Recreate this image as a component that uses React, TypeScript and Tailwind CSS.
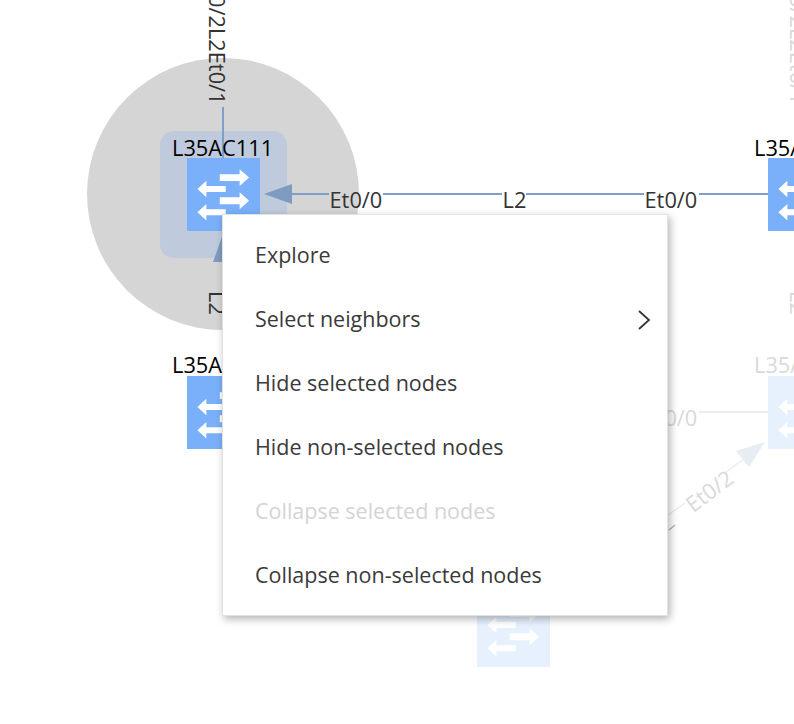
import React from 'react';

const labelFont = "font-['Open_Sans','Noto_Sans',sans-serif]";

const SwitchIcon = () => (
  <svg viewBox="0 0 73 73" className="w-full h-full">
    <g fill="#fff">
      <path d="M33 16h20v-5l9.500 8.500L53 28v-5H33z" />
      <path d="M39 28H19.500v-5.300L10.500 31l9 8.300V34H39z" />
      <path d="M33 39.300h20v-5l9.500 8.500L53 51.300v-5H33z" />
      <path d="M39 51.300H19.500V46l-9 8.300 9 8.300v-5.300H39z" />
    </g>
  </svg>
);

const Node = ({ left, top, faded }: { left: number; top: number; faded?: boolean }) => (
  <div
    className={`absolute w-[72.5px] h-[73px] ${faded ? 'bg-[#e6f1fd]' : 'bg-[#7ab0f9]'}`}
    style={{ left, top }}
  >
    <SwitchIcon />
  </div>
);

const Label = ({
  left,
  top,
  children,
  className = 'text-black',
}: {
  left: number;
  top: number;
  children: React.ReactNode;
  className?: string;
}) => (
  <span
    className={`absolute text-[21.8px] leading-[28px] whitespace-nowrap ${labelFont} ${className}`}
    style={{ left, top }}
  >
    {children}
  </span>
);

const VerticalLabel = ({
  left,
  top,
  children,
  className = 'text-[#333]',
}: {
  left: number;
  top: number;
  children: React.ReactNode;
  className?: string;
}) => (
  <span
    className={`absolute [writing-mode:vertical-rl] text-[21.8px] leading-[28px] whitespace-nowrap ${labelFont} ${className}`}
    style={{ left, top }}
  >
    {children}
  </span>
);

const menuItems = [
  { text: 'Explore' },
  { text: 'Select neighbors', sub: true },
  { text: 'Hide selected nodes' },
  { text: 'Hide non-selected nodes' },
  { text: 'Collapse selected nodes', disabled: true },
  { text: 'Collapse non-selected nodes' },
];

export default function App() {
  return (
    <div className="relative w-[794px] h-[724px] overflow-hidden bg-white">
      {/* selection halo */}
      <div className="absolute left-[87px] top-[58px] w-[272px] h-[272px] rounded-full bg-[#d5d5d5]" />
      <div className="absolute left-[160px] top-[131px] w-[127px] h-[127px] rounded-[14px] bg-[#bfcbdc]" />

      {/* edges */}
      <svg className="absolute left-0 top-0" width="794" height="724">
        <line x1="223" y1="107" x2="223" y2="158" stroke="#7f9fc8" strokeWidth="2" />
        <line x1="292" y1="194" x2="329" y2="194" stroke="#7f9fc8" strokeWidth="2" />
        <line x1="383" y1="194" x2="502" y2="194" stroke="#7f9fc8" strokeWidth="2" />
        <line x1="526" y1="194" x2="644" y2="194" stroke="#7f9fc8" strokeWidth="2" />
        <line x1="699" y1="194" x2="768" y2="194" stroke="#7f9fc8" strokeWidth="2" />
        <polygon points="264,194 292,184 292,204" fill="#7f9bc0" />
        <polygon points="223,234 233,262 213,262" fill="#7f9bc0" />
        <line x1="699" y1="412" x2="768" y2="412" stroke="#e8edf4" strokeWidth="2" />
        <line x1="668" y1="515" x2="685" y2="503" stroke="#e8edf4" strokeWidth="1.500" />
        <line x1="726" y1="472" x2="745" y2="458" stroke="#e8edf4" strokeWidth="1.500" />
        <polygon points="765,442 736,451 749,467" fill="#e8edf4" />
        <line x1="669" y1="530" x2="675" y2="525" stroke="#b5b5b5" strokeWidth="1.500" />
      </svg>

      <Node left={187} top={157.5} />
      <Node left={768} top={157.5} />
      <Node left={187} top={375.5} />
      <Node left={768} top={375.5} faded />
      <Node left={477} top={593.5} faded />

      <Label left={172} top={134}>L35AC111</Label>
      <Label left={754} top={134}>L35AC112</Label>
      <Label left={172} top={351}>L35AC113</Label>
      <Label left={754} top={351} className="text-[#d9d9d9]">L35AC114</Label>

      <Label left={329.5} top={186} className="text-[#333]">Et0/0</Label>
      <Label left={502.5} top={186} className="text-[#333]">L2</Label>
      <Label left={644.5} top={186} className="text-[#333]">Et0/0</Label>
      <Label left={644.5} top={404} className="text-[#d9d9d9]">Et0/0</Label>

      {/* rotated link labels */}
      <VerticalLabel left={203} top={-5}>0/2L2Et0/1</VerticalLabel>
      <VerticalLabel left={203} top={291}>L2</VerticalLabel>
      <VerticalLabel left={784} top={-5} className="text-[#d9d9d9]">0/2L2Et0/1</VerticalLabel>
      <VerticalLabel left={784} top={291} className="text-[#d9d9d9]">L2</VerticalLabel>
      <span className={`absolute left-[683px] top-[477px] -rotate-[37deg] text-[21.8px] leading-[28px] whitespace-nowrap text-[#d9d9d9] ${labelFont}`}>
        Et0/2
      </span>

      {/* context menu */}
      <div className="absolute left-[222px] top-[214px] w-[446px] h-[402px] pt-[8px] bg-white border border-[#e2e2e2] shadow-[2px_3px_8px_rgba(0,0,0,0.3)] font-['Open_Sans',sans-serif]">
        {menuItems.map((item) => (
          <div
            key={item.text}
            className={`flex items-center justify-between h-16 pl-[32px] pr-[16px] text-[21.5px] ${item.disabled ? 'text-[#d4d4d4]' : 'text-[#3a3a3a]'}`}
          >
            <span>{item.text}</span>
            {item.sub && (
              <svg width="13" height="20" viewBox="0 0 13 20" fill="none" stroke="#333" strokeWidth="1.800" className="translate-y-px">
                <polyline points="1,1 11,10 1,19" />
              </svg>
            )}
          </div>
        ))}
      </div>
    </div>
  );
}
